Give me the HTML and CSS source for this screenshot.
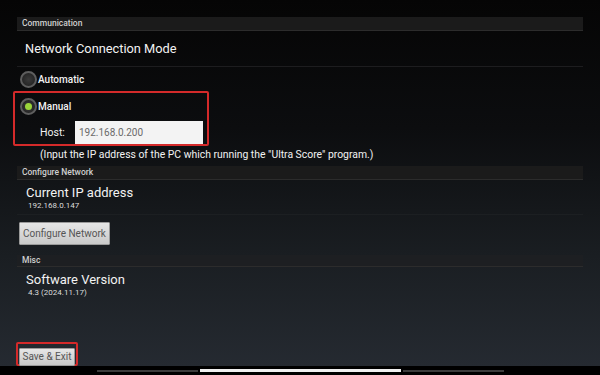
FILE: index.html
```html
<!DOCTYPE html>
<html lang="en">
<head>
    <meta charset="UTF-8">
    <meta name="viewport" content="width=device-width, initial-scale=1.0">
    <title>Settings</title>
    <link rel="stylesheet" href="styles.css">
</head>
<body>
    <div class="screen">
        <div class="section-header">Communication</div>
        <div class="pref-title">Network Connection Mode</div>

        <div class="radio-row">
            <span class="radio"></span>
            <span class="radio-label">Automatic</span>
        </div>

        <div class="highlight manual-box">
            <div class="radio-row">
                <span class="radio checked"></span>
                <span class="radio-label">Manual</span>
            </div>
            <div class="host-row">
                <span class="host-label">Host:</span>
                <input type="text" class="host-input" value="192.168.0.200">
            </div>
        </div>
        <div class="help-text">(Input the IP address of the PC which running the "Ultra Score" program.)</div>

        <div class="section-header">Configure Network</div>
        <div class="pref-item">
            <div class="pref-name">Current IP address</div>
            <div class="pref-value">192.168.0.147</div>
        </div>
        <div class="btn-row">
            <button class="btn">Configure Network</button>
        </div>

        <div class="section-header misc">Misc</div>
        <div class="pref-item plain">
            <div class="pref-name">Software Version</div>
            <div class="pref-value">4.3 (2024.11.17)</div>
        </div>

        <div class="footer">
            <div class="highlight save-box">
                <button class="btn save">Save &amp; Exit</button>
            </div>
        </div>
    </div>
    <div class="nav-strip">
        <span class="track left"></span>
        <span class="thumb"></span>
        <span class="track right"></span>
    </div>
</body>
</html>
```

FILE: styles.css
```css
* {
    box-sizing: border-box;
}

body {
    margin: 0;
    width: 600px;
    height: 375px;
    overflow: hidden;
    background: #000;
    color: #f2f2f2;
    font-family: Roboto, "Noto Sans", sans-serif;
}

.screen {
    height: 366px;
    padding-top: 17px;
    display: flex;
    flex-direction: column;
    background: linear-gradient(to bottom, #050505 0%, #0c0d0f 35%, #1a1e22 70%, #252a31 100%);
}

.section-header {
    margin: 0 17px;
    height: 14px;
    padding-left: 5px;
    line-height: 13px;
    font-size: 8.5px;
    font-weight: 500;
    color: #cfcfcf;
    background: #1b1b1b;
    border-bottom: 1px solid #2c2c2c;
}

.section-header.misc {
    margin-top: 10px;
    height: 12px;
    line-height: 11px;
    background: #1d1f22;
}

.pref-title {
    margin: 0 17px;
    height: 36px;
    padding-left: 8px;
    line-height: 35px;
    font-size: 12.8px;
    border-bottom: 1px solid #1d1d1f;
}

.radio-row {
    display: flex;
    align-items: center;
    height: 24px;
    padding-left: 20px;
}

.radio {
    width: 17px;
    height: 17px;
    border-radius: 50%;
    border: 2px solid #5e5e5e;
    background: radial-gradient(circle, #3a3a3a 0%, #262626 70%);
    display: flex;
    align-items: center;
    justify-content: center;
}

.radio.checked::after {
    content: "";
    width: 7px;
    height: 7px;
    border-radius: 50%;
    background: #9ad43a;
}

.radio-label {
    margin-left: 1px;
    font-size: 10px;
    font-weight: 500;
}

.highlight {
    border: 2px solid #d42a2a;
    border-radius: 2px;
}

.manual-box {
    width: 196px;
    height: 55px;
    margin-left: 13px;
    padding-top: 1px;
}

.manual-box .radio-row {
    padding-left: 5px;
}

.host-row {
    display: flex;
    align-items: center;
    margin-top: 3px;
}

.host-label {
    width: 60px;
    padding-left: 25px;
    font-size: 10.5px;
    color: #f2f2f2;
}

.host-input {
    width: 128px;
    height: 23px;
    border: none;
    background: #f3f3f3;
    padding: 0 4px;
    font-family: inherit;
    font-size: 10px;
    color: #6a6a6a;
}

.help-text {
    height: 20px;
    padding-left: 40px;
    line-height: 17px;
    font-size: 10.4px;
}

.pref-item {
    margin: 0 17px;
    height: 35px;
    padding: 4px 0 0 9px;
    border-bottom: 1px solid #1c1f22;
}

.pref-item.plain {
    border-bottom: none;
}

.pref-name {
    font-size: 13px;
    line-height: 17px;
}

.pref-value {
    font-size: 8px;
    line-height: 10px;
    padding-left: 2px;
    color: #dcdcdc;
}

.btn-row {
    padding: 7px 0 0 19px;
}

.btn {
    height: 23px;
    padding: 0 3px;
    border: 1px solid #9a9a9a;
    border-radius: 1px;
    background: linear-gradient(to bottom, #e6e6e6, #c9c9c9);
    color: #555;
    font-family: inherit;
    font-size: 10px;
}

.footer {
    margin-top: auto;
    padding-left: 16px;
}

.save-box {
    width: 62px;
    height: 24px;
    padding: 1px;
}

.save {
    width: 100%;
    height: 100%;
    padding: 0;
}

.nav-strip {
    height: 9px;
    display: flex;
    align-items: center;
    padding-left: 97px;
    gap: 2px;
}

.track {
    width: 101px;
    height: 2px;
    background: #3c3c3c;
}

.thumb {
    width: 201px;
    height: 3px;
    background: #f0f0f0;
}
```
